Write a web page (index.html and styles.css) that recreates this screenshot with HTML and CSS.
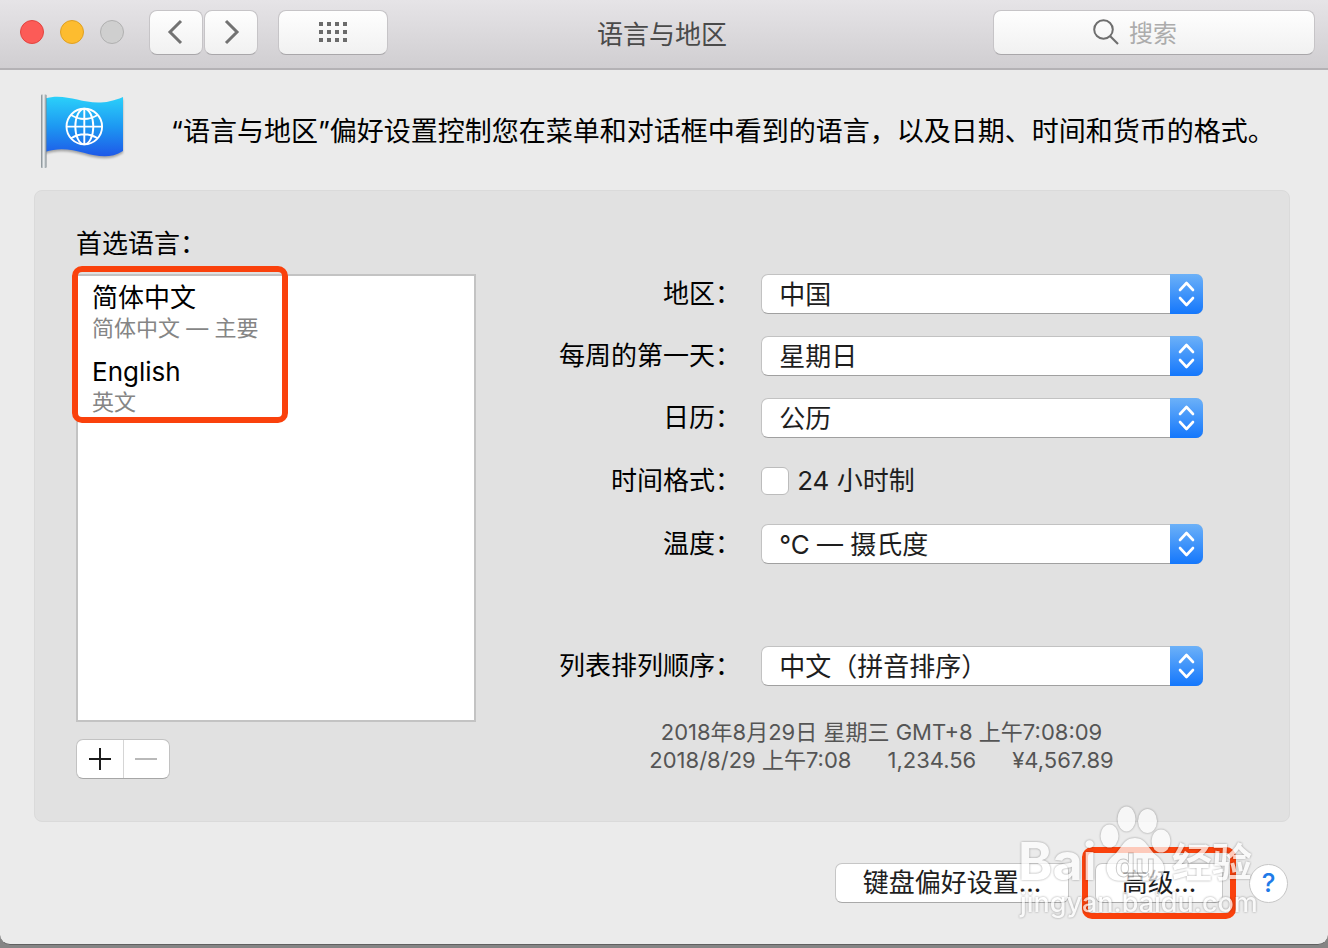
FILE: index.html
```html
<!DOCTYPE html>
<html lang="zh-CN">
<head>
  <meta charset="UTF-8">
  <meta name="viewport" content="width=device-width, initial-scale=1.0">
  <title>语言与地区</title>
  <link rel="stylesheet" href="styles.css">
</head>
<body>
  <svg class="symbols" aria-hidden="true">
    <symbol id="arrows" viewBox="0 0 33 40">
      <path d="M10 16l6.500-7 6.500 7M10 24l6.500 7 6.500-7" fill="none" stroke="#fff" stroke-width="2.600" stroke-linecap="round" stroke-linejoin="round"/>
    </symbol>
  </svg>

  <div class="window">
    <header class="titlebar">
      <div class="toolbar">
        <div class="lights">
          <button class="light close" aria-label="关闭"></button>
          <button class="light minimize" aria-label="最小化"></button>
          <button class="light zoom" aria-label="缩放" disabled></button>
        </div>
        <div class="nav">
          <button class="tool" aria-label="后退">
            <svg width="20" height="28" viewBox="0 0 20 28"><path d="M15 3L4 14l11 11" fill="none" stroke="#727272" stroke-width="3"/></svg>
          </button>
          <button class="tool" aria-label="前进">
            <svg width="20" height="28" viewBox="0 0 20 28"><path d="M5 3l11 11L5 25" fill="none" stroke="#727272" stroke-width="3"/></svg>
          </button>
        </div>
        <button class="tool show-all" aria-label="全部显示">
          <svg width="28" height="20" viewBox="0 0 28 20"><path d="M0 2h28M0 10h28M0 18h28" stroke="#6b6b6b" stroke-width="4" stroke-dasharray="4 4"/></svg>
        </button>
      </div>
      <h1>语言与地区</h1>
      <label class="search">
        <svg width="26" height="26" viewBox="0 0 26 26"><circle cx="10.500" cy="10.500" r="9.300" fill="none" stroke="#6e6e6e" stroke-width="2"/><path d="M17 17l8 8" stroke="#6e6e6e" stroke-width="2.200"/></svg>
        <input type="text" placeholder="搜索" aria-label="搜索">
      </label>
    </header>

    <section class="intro">
      <svg class="flag" width="90" height="84" viewBox="38 90 90 84" aria-hidden="true">
        <defs>
          <linearGradient id="cloth" x1="0" y1="0" x2="0" y2="1">
            <stop offset="0" stop-color="#2bd0fa"/>
            <stop offset="0.500" stop-color="#1d98f2"/>
            <stop offset="1" stop-color="#1e58e8"/>
          </linearGradient>
          <linearGradient id="pole">
            <stop offset="0" stop-color="#7c868c"/>
            <stop offset="0.500" stop-color="#f3f6f7"/>
            <stop offset="1" stop-color="#7c868c"/>
          </linearGradient>
        </defs>
        <path class="cloth" d="M45 98.500C72 91 89 112 123 97V151C98 167 76 141 45 152Z" fill="url(#cloth)"/>
        <rect x="41" y="94.500" width="5.500" height="73.500" rx="1" fill="url(#pole)"/>
        <g fill="none" stroke="#fff" stroke-width="1.900">
          <circle cx="84.300" cy="126.600" r="17.800"/>
          <ellipse cx="84.300" cy="126.600" rx="9" ry="17.800"/>
          <path d="M84.300 108.800v35.600M66.500 126.600h35.600M71 115q13.300 8 26.600 0M71 138.200q13.300-8 26.600 0"/>
        </g>
      </svg>
      <p>“语言与地区”偏好设置控制您在菜单和对话框中看到的语言，以及日期、时间和货币的格式。</p>
    </section>

    <main class="panel">
      <section class="languages">
        <h2>首选语言：</h2>
        <div class="list">
          <ul>
            <li><strong>简体中文</strong><span>简体中文 — 主要</span></li>
            <li><strong>English</strong><span>英文</span></li>
          </ul>
          <div class="mark mark-list"></div>
        </div>
        <div class="list-buttons">
          <button aria-label="添加语言"><svg width="22" height="22" viewBox="0 0 22 22"><path d="M0 11h22M11 0v22" stroke="#1c1c1c" stroke-width="2"/></svg></button>
          <button aria-label="移除语言" disabled><svg width="22" height="22" viewBox="0 0 22 22"><path d="M0 11h22" stroke="#b9b9b9" stroke-width="2"/></svg></button>
        </div>
      </section>

      <form class="settings">
        <div class="row">
          <label for="region">地区：</label>
          <div class="popup">
            <select id="region"><option>中国</option></select>
            <svg><use href="#arrows"/></svg>
          </div>
        </div>
        <div class="row">
          <label for="first-day">每周的第一天：</label>
          <div class="popup">
            <select id="first-day"><option>星期日</option></select>
            <svg><use href="#arrows"/></svg>
          </div>
        </div>
        <div class="row">
          <label for="calendar">日历：</label>
          <div class="popup">
            <select id="calendar"><option>公历</option></select>
            <svg><use href="#arrows"/></svg>
          </div>
        </div>
        <div class="row row-check">
          <span>时间格式：</span>
          <label class="check"><input type="checkbox">24 小时制</label>
        </div>
        <div class="row row-last">
          <label for="temperature">温度：</label>
          <div class="popup">
            <select id="temperature"><option>°C — 摄氏度</option></select>
            <svg><use href="#arrows"/></svg>
          </div>
        </div>
        <div class="row">
          <label for="sort">列表排列顺序：</label>
          <div class="popup">
            <select id="sort"><option>中文（拼音排序）</option></select>
            <svg><use href="#arrows"/></svg>
          </div>
        </div>
        <div class="sample">
          <p>2018年8月29日 星期三 GMT+8 上午7:08:09</p>
          <p class="formats"><span>2018/8/29 上午7:08</span><span>1,234.56</span><span>¥4,567.89</span></p>
        </div>
      </form>
    </main>

    <footer class="actions">
      <button class="push keyboard">键盘偏好设置...</button>
      <div class="advanced">
        <button class="push">高级...</button>
        <div class="mark mark-advanced"></div>
      </div>
      <button class="help" aria-label="帮助">?</button>

      <svg class="watermark" width="260" height="126" viewBox="1010 800 260 126">
        <g class="paw">
          <ellipse cx="1109.500" cy="835" rx="9" ry="11.500"/>
          <ellipse cx="1126.500" cy="818" rx="9" ry="12.500"/>
          <ellipse cx="1147.500" cy="820" rx="9.500" ry="12"/>
          <ellipse cx="1161" cy="840" rx="9.500" ry="11.500"/>
          <path d="M1135 837c-12 0-13 11-22 18-6 5-8 11-5 18 4 10 16 6 27 6s23 4 28-6c3-7 0-13-6-18-9-7-11-18-22-18z"/>
        </g>
        <text class="brand" x="1018" y="879">Bai</text>
        <text class="du" x="1115" y="876">du</text>
        <text class="cn" x="1172" y="876">经验</text>
        <text class="url" x="1020" y="911">jingyan.baidu.com</text>
      </svg>
    </footer>
  </div>
</body>
</html>
```
FILE: styles.css
```css
* {
  margin: 0;
  padding: 0;
  box-sizing: border-box;
}
body {
  background-color: #858585;
  color: #000;
  font-family: Inter, "Noto Sans CJK SC", sans-serif;
  font-size: 26px;
  line-height: 40px;
}
button, input, select {
  font: inherit;
  color: inherit;
}
.symbols {
  position: absolute;
  width: 0;
  height: 0;
}
.window {
  min-height: calc(100vh - 3px);
  background-color: #ebebeb;
  border-bottom: 1px solid #606060;
  border-radius: 0 0 10px 10px;
}

/* 标题栏 */
.titlebar {
  display: grid;
  grid-template-columns: 1fr auto 1fr;
  align-items: center;
  height: 70px;
  padding: 0 13px 4px 9px;
  background: linear-gradient(#e6e4e7, #d0ced1);
  border-bottom: 2px solid #b4b2b5;
}
.toolbar {
  display: flex;
  align-items: center;
  gap: 20px;
  padding-left: 11px;
}
.lights {
  display: flex;
  gap: 16px;
  margin-right: 5px;
}
.light {
  width: 24px;
  height: 24px;
  border: 1px solid;
  border-radius: 50%;
}
.close {
  background-color: #fc5b57;
  border-color: #e2443f;
}
.minimize {
  background-color: #fdbc2f;
  border-color: #dfa023;
}
.zoom {
  background-color: #cfcfcf;
  border-color: #b0b0b0;
}
.nav {
  display: flex;
  gap: 1px;
}
.tool, .search {
  display: flex;
  align-items: center;
  justify-content: center;
  width: 54px;
  height: 45px;
  background: linear-gradient(#fefefe, #f1f1f1);
  border: 1px solid #c6c4c7;
  border-bottom-color: #a9a7aa;
  border-radius: 8px;
}
.show-all {
  width: 110px;
}
h1 {
  padding-top: 6px;
  font-size: 26px;
  font-weight: 400;
  color: #4a4a4a;
}
.search {
  justify-self: end;
  justify-content: flex-start;
  gap: 10px;
  width: 322px;
  padding-left: 99px;
}
.search svg {
  flex: none;
}
.search input {
  flex: 1;
  min-width: 0;
  padding-top: 4px;
  font-size: 24px;
  background: none;
  border: none;
  outline: none;
}
.search input::placeholder {
  color: #acacac;
}

/* 说明 */
.intro {
  display: flex;
  align-items: center;
  gap: 43px;
  height: 120px;
  padding: 4px 38px 0;
}
.flag {
  flex: none;
}
.cloth {
  filter: drop-shadow(0 2px 1px rgba(0, 0, 0, 0.3));
}
.intro p {
  font-size: 27px;
}

/* 主面板 */
.panel {
  display: flex;
  margin: 0 38px 0 34px;
  padding: 33px 86px 42px 41px;
  background-color: #e1e1e1;
  border: 1px solid #dadada;
  border-radius: 8px;
}
.languages {
  flex: 0 1 400px;
}
h2 {
  margin-bottom: 10px;
  font-size: 26px;
  font-weight: 400;
}
.list {
  position: relative;
  height: 448px;
  padding: 6px 14px;
  background-color: #fff;
  border: 2px solid #c3c3c3;
}
.list ul {
  list-style: none;
}
.list li {
  margin-bottom: 14px;
}
.list strong, .list span {
  display: block;
}
.list strong {
  font-weight: 400;
  line-height: 32px;
}
.list span {
  font-size: 22px;
  line-height: 28px;
  color: #858585;
}
/* 红色标注框 */
.mark {
  position: absolute;
  border: 6px solid #fa410c;
  border-radius: 10px;
  pointer-events: none;
}
.mark-list {
  top: -10px;
  left: -6px;
  width: 216px;
  height: 157px;
}
.list-buttons {
  display: flex;
  width: 94px;
  margin-top: 17px;
  background-color: #fff;
  border: 1px solid #c2c2c2;
  border-bottom-color: #a6a6a6;
  border-radius: 7px;
}
.list-buttons button {
  flex: 1;
  display: flex;
  align-items: center;
  justify-content: center;
  height: 38px;
  background: none;
  border: none;
}
.list-buttons button + button {
  border-left: 1px solid #d5d5d5;
}

.settings {
  flex: 1;
  display: flex;
  flex-direction: column;
  gap: 22px;
  margin-top: 50px;
}
.row {
  display: grid;
  grid-template-columns: 3fr 5fr;
  gap: 20px;
  align-items: center;
  text-align: right;
}
.row-check {
  height: 42px;
}
.row-last {
  margin-bottom: 60px;
}
.popup {
  position: relative;
  height: 40px;
}
.popup select {
  width: 100%;
  height: 40px;
  padding: 0 50px 0 17px;
  color: #1e1e1e;
  background-color: #fff;
  border: 1px solid #c2c2c2;
  border-bottom-color: #a0a0a0;
  border-radius: 7px;
  appearance: none;
}
.popup svg {
  position: absolute;
  top: 0;
  right: 0;
  width: 33px;
  height: 40px;
  background: linear-gradient(#6cb1f8, #1477fc);
  border-radius: 0 7px 7px 0;
  pointer-events: none;
}
.check {
  display: flex;
  align-items: center;
  gap: 8px;
  color: #1e1e1e;
}
.check input {
  width: 28px;
  height: 28px;
  background-color: #fff;
  border: 1px solid #bcbcbc;
  border-radius: 6px;
  appearance: none;
}
.check input:checked {
  background-color: #1477fc;
}
.sample {
  margin-top: 10px;
  padding-left: 84px;
  font-size: 22px;
  line-height: 28px;
  text-align: center;
  color: #555;
}
.formats {
  display: flex;
  justify-content: center;
  gap: 36px;
}

/* 底部按钮 */
.actions {
  position: relative;
  display: flex;
  justify-content: flex-end;
  align-items: center;
  gap: 26px;
  margin-top: 41px;
  padding-right: 40px;
}
.push {
  width: 128px;
  height: 40px;
  line-height: 36px;
  color: #1e1e1e;
  background-color: #fff;
  border: 1px solid #c6c6c6;
  border-bottom-color: #a9a9a9;
  border-radius: 7px;
}
.keyboard {
  width: 234px;
}
.advanced {
  position: relative;
  display: flex;
}
.mark-advanced {
  top: -16px;
  left: -13px;
  width: 154px;
  height: 72px;
}
.help {
  width: 39px;
  height: 39px;
  line-height: 36px;
  font-weight: 500;
  color: #1f7be8;
  background-color: #fff;
  border: 1px solid #c6c6c6;
  border-radius: 50%;
}

/* 水印 */
.watermark {
  position: absolute;
  right: 58px;
  top: -62px;
  fill: #fff;
  opacity: 0.72;
  filter: drop-shadow(0 0 1px rgba(0, 0, 0, 0.5));
  pointer-events: none;
}
.brand {
  font-size: 52px;
  font-weight: 700;
}
.du {
  font-size: 32px;
  font-weight: 700;
  fill: none;
  stroke: #b9b9b9;
}
.cn {
  font-size: 40px;
  font-weight: 700;
}
.url {
  font-size: 27px;
  font-weight: 500;
}
```
